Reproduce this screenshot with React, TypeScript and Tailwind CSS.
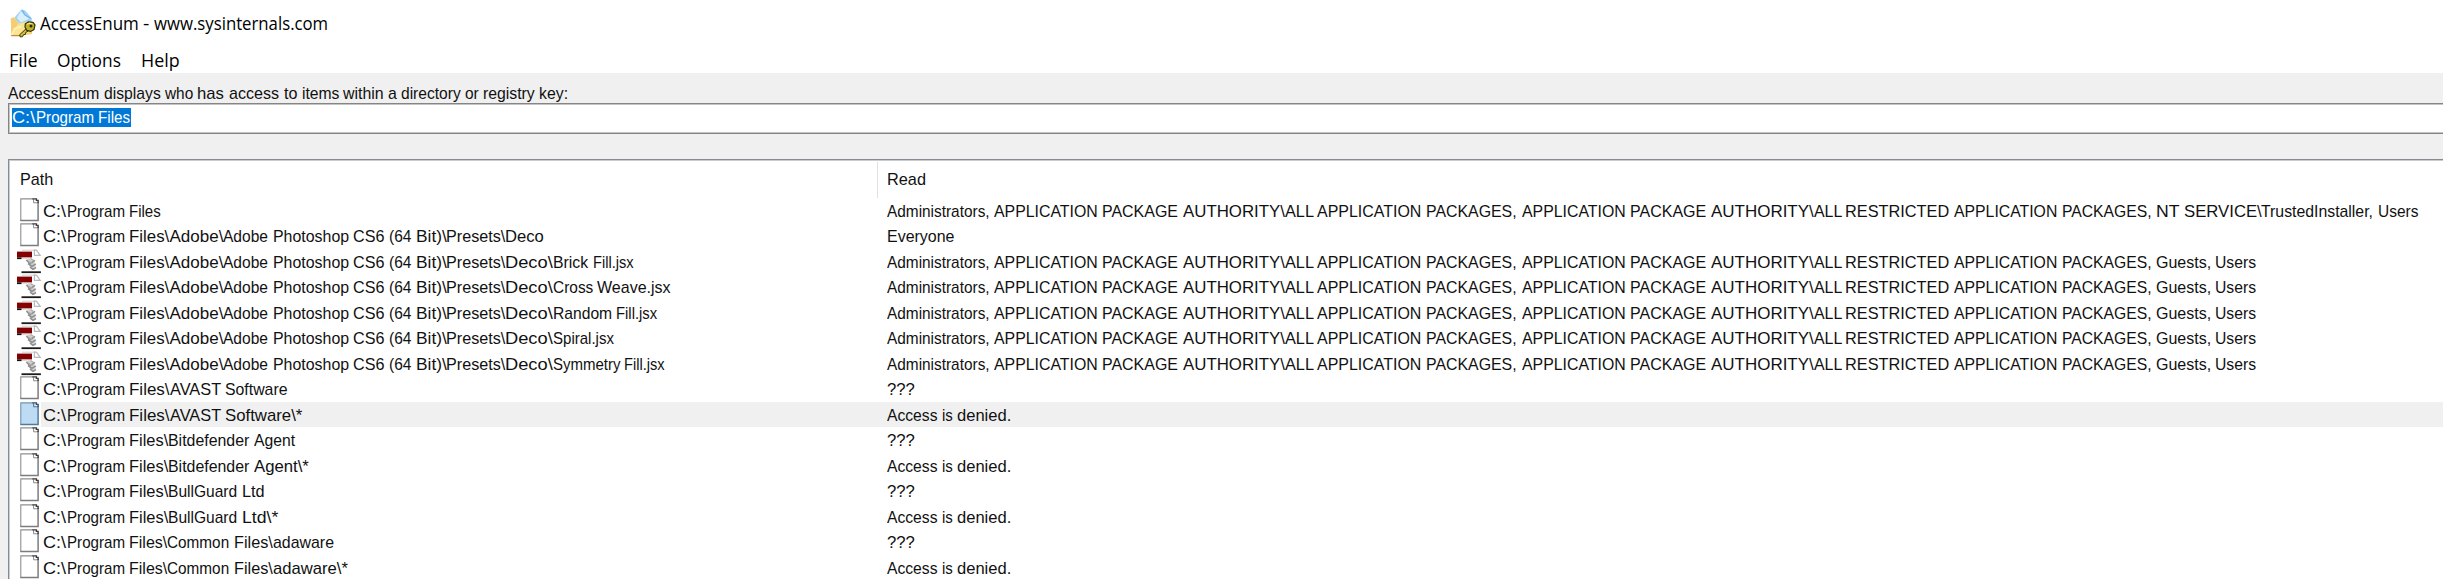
import { useLayoutEffect, useRef, useState } from "react";

type Stops = (string | number)[];

/* One word group, condensed or widened to occupy exactly `width` pixels. */
function Word({ text, width }: { text: string; width: number }) {
  const ref = useRef<HTMLSpanElement>(null);
  const [scale, setScale] = useState(1);
  useLayoutEffect(() => {
    setScale(width / ref.current!.offsetWidth);
  }, [width]);
  return (
    <span className="block shrink-0" style={{ width }}>
      <span ref={ref} className="inline-block origin-left whitespace-pre" style={{ transform: `scaleX(${scale})` }}>
        {text}
      </span>
    </span>
  );
}

/* Alternating list: start, text, start, text, ..., end. */
function Line({ stops }: { stops: Stops }) {
  const words = [];
  for (let i = 0; i + 2 < stops.length; i += 2) {
    words.push(
      <Word key={i} text={stops[i + 1] as string} width={(stops[i + 2] as number) - (stops[i] as number)} />,
    );
  }
  return <div className="flex whitespace-pre">{words}</div>;
}

const base: Stops = [43, "C:\\", 66.4, "Program ", 128.7];
const presets: Stops = [
  ...base, "Files\\", 169.3, "Adobe\\", 223.3, "Adobe ", 272.7, "Photoshop ", 353.2, "CS6 ", 389.3, "(64 ", 415.7,
  "Bit)\\", 446.3, "Presets\\", 505.2,
];
const deco: Stops = [...presets, "Deco\\", 552.5];
const avast: Stops = [...base, "Files\\", 169.6, "AVAST ", 225.3];
const bitdefender: Stops = [...base, "Files\\", 168.3, "Bitdefender ", 254.3];
const bullguard: Stops = [...base, "Files\\", 168.3, "BullGuard ", 241.5];
const adaware: Stops = [...base, "Files\\", 167.3, "Common ", 234, "Files\\", 273.2];

const packages: Stops = [
  887.2, "Administrators, ", 994, "APPLICATION ", 1102.3, "PACKAGE ", 1183, "AUTHORITY\\", 1285, "ALL ", 1317.6,
  "APPLICATION ", 1426.5, "PACKAGES, ", 1521.8, "APPLICATION ", 1630, "PACKAGE ", 1711, "AUTHORITY\\", 1813.8, "ALL ",
  1845.6, "RESTRICTED ", 1954, "APPLICATION ", 2061.8, "PACKAGES, ", 2156,
];
const guests: Stops = [...packages, "Guests, ", 2215.3, "Users", 2256];
const unknown: Stops = [887, "???", 914.5];
const denied: Stops = [887.2, "Access ", 942.5, "is ", 957.5, "denied.", 1012];

type Row = { icon: "doc" | "script"; path: Stops; read: Stops; selected?: boolean };
const rows: Row[] = [
  { icon: "doc", path: [...base, "Files", 160.5], read: [...packages, "NT ", 2184, "SERVICE\\", 2261.7, "TrustedInstaller, ", 2378, "Users", 2418] },
  { icon: "doc", path: [...presets, "Deco", 544.3], read: [886.2, "Everyone", 953.8] },
  { icon: "script", path: [...deco, "Brick ", 592.5, "Fill.jsx", 633], read: guests },
  { icon: "script", path: [...deco, "Cross ", 597, "Weave.jsx", 670.5], read: guests },
  { icon: "script", path: [...deco, "Random ", 616, "Fill.jsx", 657], read: guests },
  { icon: "script", path: [...deco, "Spiral.jsx", 613.5], read: guests },
  { icon: "script", path: [...deco, "Symmetry ", 624, "Fill.jsx", 664.5], read: guests },
  { icon: "doc", path: [...avast, "Software", 287.7], read: unknown },
  { icon: "doc", path: [...avast, "Software\\*", 302.2], read: denied, selected: true },
  { icon: "doc", path: [...bitdefender, "Agent", 295], read: unknown },
  { icon: "doc", path: [...bitdefender, "Agent\\*", 309.3], read: denied },
  { icon: "doc", path: [...bullguard, "Ltd", 264.5], read: unknown },
  { icon: "doc", path: [...bullguard, "Ltd\\*", 277.8], read: denied },
  { icon: "doc", path: [...adaware, "adaware", 334], read: unknown },
  { icon: "doc", path: [...adaware, "adaware\\*", 348.5], read: denied },
];

function DocIcon({ selected }: { selected?: boolean }) {
  return (
    <svg width="26" height="25" viewBox="0 0 26 25" className="block">
      <path d="M4.8 .9H17.2L22 5V22.7H4.8Z" fill={selected ? "#bddcf4" : "#fff"} />
      <path d="M4.8 22.8V.9H17" fill="none" stroke={selected ? "#6f95b3" : "#8f8f8f"} strokeWidth="1.1" />
      <path d="M4.3 22.6H22.1V4" fill="none" stroke={selected ? "#54799a" : "#7c7c7c"} strokeWidth="1.5" />
      <path d="M17.6 .9V4.8H22" fill="none" stroke={selected ? "#54799a" : "#8a8a8a"} strokeWidth="1" />
      <path d="M16.4 .9H20.4V2.4H22.1V5" fill="none" stroke={selected ? "#2d4e6c" : "#3a3a3a"} strokeWidth="1.4" />
    </svg>
  );
}

function ScriptIcon() {
  return (
    <svg width="26" height="25.5" viewBox="0 0 26 25.5" className="block">
      <path d="M6 1.2H19" stroke="#cfcfcf" strokeWidth="1" />
      <path d="M18.4 1V6.3H24.2L20.6 1.4Z" fill="#fff" stroke="#b9b9b9" strokeWidth="1.2" />
      <rect x="1" y="2.6" width="15" height="5.8" fill="#850000" />
      <rect x="1" y="8.4" width="4.6" height="1.7" fill="#111" />
      <path d="M5.6 9H11" stroke="#c8b0b0" strokeWidth="1" />
      <path d="M10.5 10.5C12 8.5 17 9 18 11.5L20 18C20.5 20.5 16 21.5 14.5 19.5Z" fill="#d2d2d2" />
      <path d="M10.4 11L14 14.8 19 11.4M12 14.6L16 17.4 19.8 14.8M14 18L17 20.4 20 18.6" stroke="#8f8f8f" strokeWidth="1.6" fill="none" />
      <path d="M14.5 9.4L17.5 11.6M12.8 12.2L16.2 14.8" stroke="#b0b0b0" strokeWidth="1.3" />
      <rect x="5.5" y="22.3" width="19.4" height="1.8" fill="#1c1c1c" />
    </svg>
  );
}

function AppIcon() {
  return (
    <svg width="26" height="29" viewBox="0 0 26 29" className="block">
      <path d="M2 9L9 7.4 22 12V25L9 27 2 26Z" fill="#f6d06f" />
      <path d="M5.4 7.5L11.4 .6 15 1.6 22 9.5 20.5 15 9 16 5 13Z" fill="#9fd0f5" />
      <path d="M10.8 2.2L14.8 6.3 19.2 9.8 11 13.4 6.8 9Z" fill="#d9effc" />
      <path d="M12.4 .8L14.6 6 20.8 9.2" stroke="#6eb0e6" strokeWidth="1" fill="none" />
      <path d="M.8 9.6L3.6 8.6 7 12 9.6 14.4 17 12.6 20 14V23L10.2 27.2 1.4 26.4Z" fill="#fbe492" />
      <path d="M.8 9.6L3.6 8.6 8.6 14.6 4.6 19.6 1.4 26.4Z" fill="#f5cd74" />
      <path d="M1.4 26.6L4.6 19.6 11 17.6" stroke="#fff3bd" strokeWidth="1.4" fill="none" />
      <path d="M1.2 26.6H10" stroke="#c78d34" strokeWidth="1.3" />
      <path d="M16.6 19.3L9.6 25.8 10.4 28 12.6 27.6 13.4 25.8 15.4 25.4 15.8 23.4 18.6 21.8Z" fill="#cfc23a" stroke="#35320a" strokeWidth="1" />
      <path d="M15.4 14.7L18.4 12.8 23 13.4 25 16 24 20.5 20.6 22.4 16.6 21.2 15 18Z" fill="#bfb02c" stroke="#35320a" strokeWidth="1.2" />
      <path d="M17 15.2L19.6 14.2 22.4 15" stroke="#f3ea7c" strokeWidth="1.2" fill="none" />
      <circle cx="21" cy="17" r="1.5" fill="#2d2a08" />
    </svg>
  );
}

export default function App() {
  return (
    <div className="h-[579px] w-[2443px] overflow-hidden bg-[#f0f0f0] font-['Liberation_Sans',Arial,sans-serif] text-[17px] leading-[25.5px] text-[#111]">
      <header className="h-[73px] bg-white font-['Open_Sans','Segoe_UI',sans-serif] text-[17.5px] text-black">
        <div className="flex h-12 pl-[10px]">
          <div className="pt-[9px]">
            <AppIcon />
          </div>
          <div className="pt-[11px] pl-[4px]">
            <Line stops={[40, "AccessEnum ", 143, "- ", 154.2, "www.sysinternals.com", 328.3]} />
          </div>
        </div>
        <nav className="flex pl-[8.6px]">
          <Line stops={[8.6, "File", 37.5]} />
          <div className="pl-[19.4px]">
            <Line stops={[56.9, "Options", 121.2]} />
          </div>
          <div className="pl-[19.6px]">
            <Line stops={[140.8, "Help", 179.6]} />
          </div>
        </nav>
      </header>

      <div className="h-[30px] pt-[8px] pl-[8px]">
        <Line
          stops={[
            8.2, "AccessEnum ", 104, "displays ", 165, "who ", 197.6, "has ", 229, "access ", 283.8, "to ", 301.8, "items ",
            343.3, "within ", 388.2, "a ", 401.3, "directory ", 465.4, "or ", 483.6, "registry key:", 569,
          ]}
        />
      </div>
      <div className="ml-[8px] h-[31px] border border-r-0 border-[#858585] bg-white pt-[4px] pl-[3px] shadow-[inset_1px_1px_0_#c4c4c4,inset_0_-1px_0_#c4c4c4]">
        <div className="h-[19px] w-[119px] bg-[#0078d7] leading-[19px] text-white">
          <Line stops={[12, "C:\\", 35.5, "Program ", 97.8, "Files", 130]} />
        </div>
      </div>

      <main className="mt-[25px] ml-[8px] h-[420px] overflow-hidden border border-r-0 border-b-0 border-[#868b93] bg-white shadow-[inset_1px_1px_0_#c9ccd1]">
        <div className="flex h-[37.6px] pt-[2px]">
          <div className="w-[869px] border-r border-[#e2e2e2] pt-[4.6px] pl-[10.6px]">
            <Line stops={[19, "Path", 52.3]} />
          </div>
          <div className="pt-[4.6px] pl-[9px]">
            <Line stops={[886.4, "Read", 925.7]} />
          </div>
        </div>
        {rows.map((row, i) => (
          <div key={i} className="flex h-[25.5px] pl-[7px]">
            <div className="w-[25px] shrink-0">{row.icon === "doc" ? <DocIcon selected={row.selected} /> : <ScriptIcon />}</div>
            <div className={row.selected ? "flex grow bg-[#f0f0f0] pt-px" : "flex grow pt-px"}>
              <div className="w-[846px] shrink-0 pl-[2.2px]">
                <Line stops={row.path} />
              </div>
              <Line stops={row.read} />
            </div>
          </div>
        ))}
      </main>
    </div>
  );
}
